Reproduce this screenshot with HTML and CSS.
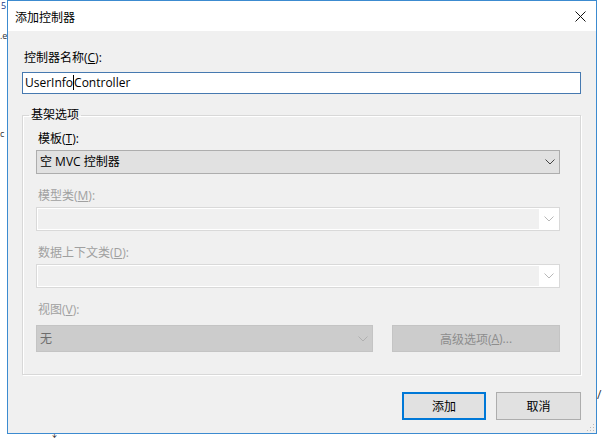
FILE: index.html
```html
<!DOCTYPE html>
<html lang="zh-CN">
<head>
    <meta charset="UTF-8">
    <title>添加控制器</title>
    <link rel="stylesheet" href="styles.css">
</head>
<body>
    <div class="backdrop">
        <span class="frag frag-a">5</span>
        <span class="frag frag-b">.e</span>
        <span class="frag frag-c">c</span>
        <span class="frag frag-d">/</span>
        <span class="frag frag-e">↓</span>
    </div>

    <div class="dialog">
        <div class="titlebar">
            <span class="title">添加控制器</span>
            <svg class="close" width="11" height="11" viewBox="0 0 11 11">
                <path d="M0.5 0.5 L10.5 10.5 M10.5 0.5 L0.5 10.5" stroke="#111" stroke-width="1" fill="none"/>
            </svg>
        </div>

        <div class="content">
            <label class="label">控制器名称(<u>C</u>):</label>
            <div class="textbox">UserInfo<span class="caret"></span>Controller</div>

            <fieldset class="group">
                <legend>基架选项</legend>

                <div class="field">
                    <label class="label">模板(<u>T</u>):</label>
                    <div class="combo">
                        <span class="combo-text">空 MVC 控制器</span>
                        <svg class="chev" width="10" height="6" viewBox="0 0 10 6"><path d="M0.5 0.5 L5 5 L9.5 0.5" stroke="#444" fill="none"/></svg>
                    </div>
                </div>

                <div class="field">
                    <label class="label disabled">模型类(<u>M</u>):</label>
                    <div class="combo combo-off">
                        <span class="combo-text"></span>
                        <span class="chev-box"><svg width="10" height="6" viewBox="0 0 10 6"><path d="M0.5 0.5 L5 5 L9.5 0.5" stroke="#b8b8b8" fill="none"/></svg></span>
                    </div>
                </div>

                <div class="field">
                    <label class="label disabled">数据上下文类(<u>D</u>):</label>
                    <div class="combo combo-off">
                        <span class="combo-text"></span>
                        <span class="chev-box"><svg width="10" height="6" viewBox="0 0 10 6"><path d="M0.5 0.5 L5 5 L9.5 0.5" stroke="#b8b8b8" fill="none"/></svg></span>
                    </div>
                </div>

                <div class="field field-last">
                    <label class="label disabled">视图(<u>V</u>):</label>
                    <div class="view-row">
                        <div class="combo combo-grey">
                            <span class="combo-text">无</span>
                            <svg class="chev" width="10" height="6" viewBox="0 0 10 6"><path d="M0.5 0.5 L5 5 L9.5 0.5" stroke="#b0b0b0" fill="none"/></svg>
                        </div>
                        <div class="btn btn-off">高级选项(<u>A</u>)...</div>
                    </div>
                </div>
            </fieldset>

            <div class="actions">
                <div class="btn btn-default">添加</div>
                <div class="btn">取消</div>
            </div>
        </div>

        <svg class="grip" width="8" height="8" viewBox="0 0 8 8">
            <rect x="6" y="0" width="1" height="1" fill="#b8b8b8"/>
            <rect x="3" y="3" width="1" height="1" fill="#b8b8b8"/>
            <rect x="6" y="3" width="1" height="1" fill="#b8b8b8"/>
            <rect x="0" y="6" width="1" height="1" fill="#b8b8b8"/>
            <rect x="3" y="6" width="1" height="1" fill="#b8b8b8"/>
            <rect x="6" y="6" width="1" height="1" fill="#b8b8b8"/>
        </svg>
    </div>
</body>
</html>
```

FILE: styles.css
```css
body {
    margin: 0;
    width: 604px;
    height: 441px;
    overflow: hidden;
    background-color: #ffffff;
    font-family: "Open Sans", "Noto Sans CJK SC", sans-serif;
    font-size: 12px;
    color: #000000;
    position: relative;
}
.backdrop {
    position: absolute;
    left: 0;
    top: 0;
    width: 604px;
    height: 441px;
}
.frag {
    position: absolute;
    font-size: 9px;
    color: #1a3a8a;
    line-height: 10px;
}
.frag-a { left: 1px; top: 1px; }
.frag-b { left: 0; top: 31px; color: #333; }
.frag-c { left: 0; top: 129px; color: #333; }
.frag-d { left: 597px; top: 388px; color: #333; font-size: 12px; line-height: 14px; }
.frag-e { left: 50px; top: 429px; color: #222; }

.dialog {
    position: relative;
    margin-left: 7px;
    width: 590px;
    height: 434px;
    box-sizing: border-box;
    border: 1px solid #3c8bd0;
    background-color: #f0f0f0;
    display: flex;
    flex-direction: column;
}
.titlebar {
    height: 30px;
    background-color: #ffffff;
    display: flex;
    align-items: center;
    justify-content: space-between;
    padding: 0 10px 0 7px;
    flex-shrink: 0;
}
.title {
    font-family: "Noto Sans CJK SC", sans-serif;
    font-size: 12px;
    color: #000;
}
.content {
    flex: 1;
    display: flex;
    flex-direction: column;
    padding: 19px 15px 13px 14px;
}
.label {
    display: block;
    line-height: 16px;
    height: 16px;
    padding-left: 2px;
}
.label u {
    text-decoration: underline;
}
.disabled {
    color: #a0a0a0;
}
.textbox {
    margin-top: 6px;
    height: 22px;
    box-sizing: border-box;
    border: 1px solid #4679b0;
    background-color: #ffffff;
    line-height: 20px;
    padding-left: 2px;
    white-space: nowrap;
}
.caret {
    display: inline-block;
    width: 1px;
    height: 15px;
    background-color: #000;
    vertical-align: -3px;
}
.group {
    margin: 13px 0 0 0;
    padding: 8px 20px 22px 13px;
    border: 1px solid #d8d8d8;
    box-shadow: inset 1px 1px 0 #ffffff, 1px 1px 0 #ffffff;
    min-width: 0;
}
.group legend {
    padding: 0 2px;
    margin-left: -7px;
    line-height: 16px;
}
.field {
    display: flex;
    flex-direction: column;
    gap: 3px;
    margin-bottom: 14px;
}
.field-last {
    margin-bottom: 0;
    gap: 7px;
}
.combo {
    height: 24px;
    box-sizing: border-box;
    border: 1px solid #adadad;
    background-color: #e1e1e1;
    display: flex;
    align-items: center;
    justify-content: space-between;
    padding: 0 4px 0 3px;
}
.combo-text {
    line-height: 20px;
}
.combo-off {
    border: 1px solid #d9d9d9;
    background-color: #ffffff;
    padding: 1px;
    align-items: stretch;
}
.combo-off .combo-text {
    flex: 1;
    background-color: #f0f0f0;
}
.chev-box {
    width: 19px;
    display: flex;
    align-items: center;
    justify-content: center;
    background-color: #ffffff;
}
.view-row {
    display: flex;
    justify-content: space-between;
    gap: 19px;
}
.combo-grey {
    flex: 0 0 337px;
    height: 27px;
    background-color: #cccccc;
    border-color: #c4c4c4;
    color: #6d6d6d;
}
.btn {
    height: 28px;
    width: 85px;
    box-sizing: border-box;
    border: 1px solid #adadad;
    background-color: #e1e1e1;
    display: flex;
    align-items: center;
    justify-content: center;
}
.btn-off {
    flex: 1;
    height: 27px;
    background-color: #cccccc;
    border-color: #c4c4c4;
    color: #8d8d8d;
}
.btn-default {
    border: 2px solid #0078d7;
    width: 84px;
}
.actions {
    margin-top: 17px;
    display: flex;
    justify-content: flex-end;
    gap: 10px;
}
.grip {
    position: absolute;
    right: 1px;
    bottom: 1px;
}
```
